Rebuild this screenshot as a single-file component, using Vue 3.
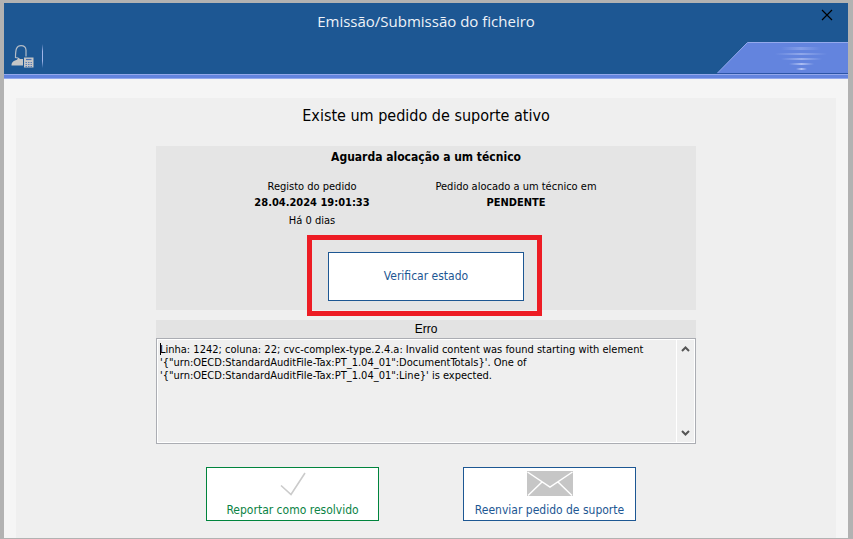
<script setup>
import { ref } from 'vue'

const status = 'Aguarda alocação a um técnico'
const error = ref(
  [
    'Linha: 1242; coluna: 22; cvc-complex-type.2.4.a: Invalid content was found starting with element',
    '\'{"urn:OECD:StandardAuditFile-Tax:PT_1.04_01":DocumentTotals}\'. One of',
    '\'{"urn:OECD:StandardAuditFile-Tax:PT_1.04_01":Line}\' is expected.',
  ].join('\n')
)
const errorBox = ref(null)

function scrollError(delta) {
  errorBox.value.scrollTop += delta
}
</script>

<template>
  <div class="window">
    <header class="header">
      <div class="titlebar">
        <h1 class="title">Emissão/Submissão do ficheiro</h1>
        <button class="close" type="button" aria-label="Fechar">
          <svg width="12" height="12" viewBox="0 0 12 12">
            <path d="M1 1L11 11M11 1L1 11" stroke="#000" stroke-width="1.2" fill="none" />
          </svg>
        </button>
      </div>
      <div class="toolbar">
        <button class="tool" type="button" aria-label="Contabilista">
          <svg width="23" height="23" viewBox="0 0 23 23">
            <path d="M7 13L4.500 12.500C4.500 9 4.500 6 5.500 3.500C6.500 1.500 8 0.700 10 0.700C13 0.700 14.800 2.500 15 5V11.500" fill="none" stroke="#b4bcc6" stroke-width="1.200" />
            <path d="M0.500 20.500C0.500 17.500 2 16 6 14.700L7.500 12.500L9 14H12V20.500Z" fill="#c6c6c6" />
            <rect x="13" y="12.500" width="9.500" height="10" fill="#c6c6c6" />
            <path d="M15 14.500H20.500" stroke="#4a70b0" stroke-width="1.200" />
            <path d="M14.500 17.500H21M14.500 19.500H21M14.500 21.500H21" stroke="#5b7fb8" stroke-width="1.200" stroke-dasharray="1.500 1" />
          </svg>
        </button>
        <span class="divider"></span>
        <svg class="tab" width="131" height="32" viewBox="0 0 131 32">
          <defs>
            <linearGradient id="glow">
              <stop offset="0" stop-color="#b4c4f4" stop-opacity="0" />
              <stop offset="0.5" stop-color="#b4c4f4" />
              <stop offset="1" stop-color="#b4c4f4" stop-opacity="0" />
            </linearGradient>
          </defs>
          <path d="M0.500 31L30.500 0.500H131V31Z" fill="#6384de" />
          <path d="M0.500 31L30.500 0.500H131" fill="none" stroke="#94a9ec" />
          <rect x="64" y="5" width="40" height="3" fill="url(#glow)" opacity="0.400" />
          <rect x="58" y="11" width="52" height="2" fill="url(#glow)" opacity="0.550" />
          <rect x="64" y="16" width="41" height="2" fill="url(#glow)" opacity="0.700" />
          <rect x="72" y="21" width="25" height="2" fill="url(#glow)" opacity="0.900" />
          <rect x="79" y="26" width="11" height="2" fill="url(#glow)" />
          <rect y="31" width="131" height="1" fill="#2c55a6" />
        </svg>
      </div>
    </header>

    <main class="panel">
      <h2 class="heading">Existe um pedido de suporte ativo</h2>

      <section class="card">
        <h3 class="status">{{ status }}</h3>
        <div class="details">
          <div class="detail">
            <span>Registo do pedido</span>
            <strong>28.04.2024 19:01:33</strong>
            <span class="age">Há 0 dias</span>
          </div>
          <div class="detail">
            <span>Pedido alocado a um técnico em</span>
            <strong>PENDENTE</strong>
          </div>
        </div>
        <div class="verify-wrap">
          <button class="btn verify" type="button">Verificar estado</button>
        </div>
      </section>

      <label class="error-title" for="error">Erro</label>
      <div class="error-box">
        <textarea id="error" ref="errorBox" class="error-text" readonly :value="error"></textarea>
        <span class="caret"></span>
        <div class="scroll">
          <button type="button" aria-label="Para cima" @click="scrollError(-13)">
            <svg width="9" height="6" viewBox="0 0 9 6"><path d="M1 5L4.500 1.500L8 5" fill="none" stroke="#555" stroke-width="2" /></svg>
          </button>
          <button type="button" aria-label="Para baixo" @click="scrollError(13)">
            <svg width="9" height="6" viewBox="0 0 9 6"><path d="M1 1L4.500 4.500L8 1" fill="none" stroke="#555" stroke-width="2" /></svg>
          </button>
        </div>
      </div>

      <div class="actions">
        <button class="btn action resolve" type="button">
          <svg width="26" height="26" viewBox="0 0 26 26">
            <path d="M1 14.500L11 23.500L25 2" fill="none" stroke="#cbcbcb" stroke-width="1.600" />
          </svg>
          <span>Reportar como resolvido</span>
        </button>
        <button class="btn action" type="button">
          <svg width="46" height="26" viewBox="0 0 46 26">
            <rect width="46" height="25" fill="#c6c6c6" />
            <path d="M0.500 1L23 16L45.500 1M1 24.500L15 11M45 24.500L31 11" fill="none" stroke="#fff" stroke-width="1.500" />
          </svg>
          <span>Reenviar pedido de suporte</span>
        </button>
      </div>
    </main>
  </div>
</template>

<style>
body {
  margin: 0;
  background: #b2b2b2;
}
</style>

<style scoped>
.window {
  box-sizing: border-box;
  display: flex;
  flex-direction: column;
  min-height: 100vh;
  border: solid #b2b2b2;
  border-width: 3px 5px 1px 4px;
  background: #f5f5f5;
  color: #000;
  font-family: "DejaVu Sans Condensed", "DejaVu Sans", sans-serif;
  font-size: 11px;
}

h1,
h2,
h3 {
  margin: 0;
  font-weight: 400;
}

button {
  margin: 0;
  padding: 0;
  border: 0;
  background: none;
  font: inherit;
  cursor: pointer;
}

svg {
  display: block;
}

.header {
  background: #1d5793;
}

.header::after {
  content: "";
  display: block;
  height: 3px;
  border: solid #94a9ec;
  border-width: 1px 0;
  background: #6384de;
}

.titlebar {
  display: grid;
  grid-template-columns: 1fr auto 1fr;
  align-items: start;
  height: 39px;
}

.title {
  grid-column: 2;
  padding-top: 8px;
  color: #eef2f8;
  font-family: "Open Sans", sans-serif;
  font-size: 15px;
  line-height: 20px;
}

.close {
  justify-self: end;
  padding: 6px 15px;
}

.toolbar {
  display: flex;
  align-items: flex-start;
  gap: 8px;
  padding-left: 7px;
}

.tool {
  padding-top: 3px;
}

.divider {
  width: 1px;
  height: 24px;
  margin-top: 2px;
  background: linear-gradient(#1d5793, #9fb4e8 30%, #9fb4e8 70%, #1d5793);
}

.tab {
  margin-left: auto;
}

.panel {
  flex: 1;
  display: flex;
  flex-direction: column;
  align-items: center;
  margin: 19px 12px 0;
  background: #efefef;
}

.heading {
  padding: 6px 0 18px;
  font-size: 16px;
  line-height: 24px;
}

.card,
.error-title,
.error-box {
  box-sizing: border-box;
  width: 100%;
  max-width: 540px;
}

.card {
  padding-bottom: 9px;
  background: #e5e5e5;
}

.status {
  padding-top: 1px;
  font-size: 12px;
  font-weight: 700;
  line-height: 20px;
  text-align: center;
}

.details {
  display: grid;
  grid-template-columns: 204px 204px;
  justify-content: center;
  padding: 12px 24px 0 0;
}

.detail {
  display: flex;
  flex-direction: column;
  align-items: center;
  line-height: 16px;
}

.age {
  padding-top: 2px;
}

.verify-wrap {
  position: relative;
  display: flex;
  justify-content: center;
  padding-top: 23px;
}

.verify-wrap::after {
  content: "";
  position: absolute;
  top: 6px;
  left: 50%;
  box-sizing: border-box;
  width: 235px;
  height: 81px;
  margin-left: -119px;
  border: 5px solid #ed1c24;
  pointer-events: none;
}

.btn {
  box-sizing: border-box;
  border: 1px solid #1d5793;
  background: #fff;
  color: #1d5793;
  font-size: 12px;
}

.verify {
  height: 49px;
  width: 196px;
  padding-bottom: 2px;
}

.error-title {
  margin-top: 10px;
  background: #e3e3e3;
  font-family: "Liberation Sans", sans-serif;
  font-size: 12px;
  line-height: 18px;
  text-align: center;
}

.error-box {
  position: relative;
  display: flex;
  height: 106px;
  padding: 1px;
  border: 1px solid #abadb3;
  background: #fff;
}

.error-text {
  flex: 1;
  min-width: 0;
  padding: 3px 2px;
  border: 0;
  outline: 0;
  overflow: hidden;
  resize: none;
  background: #efefef;
  color: #000;
  font: inherit;
  line-height: 13px;
}

.caret {
  position: absolute;
  top: 4px;
  left: 3px;
  width: 1px;
  height: 12px;
  background: #000;
}

.scroll {
  display: flex;
  flex-direction: column;
  justify-content: space-between;
  width: 17px;
  margin-left: 1px;
  background: #efefef;
}

.scroll button {
  display: flex;
  justify-content: center;
  padding: 6px 0;
}

.actions {
  display: flex;
  flex-wrap: wrap;
  justify-content: center;
  gap: 84px;
  padding: 23px 10px 17px 0;
}

.action {
  display: flex;
  flex-direction: column;
  align-items: center;
  gap: 5px;
  width: 173px;
  height: 54px;
  padding-top: 3px;
}

.action span {
  line-height: 16px;
}

.resolve {
  border-color: #00843d;
  color: #0b8345;
}
</style>
